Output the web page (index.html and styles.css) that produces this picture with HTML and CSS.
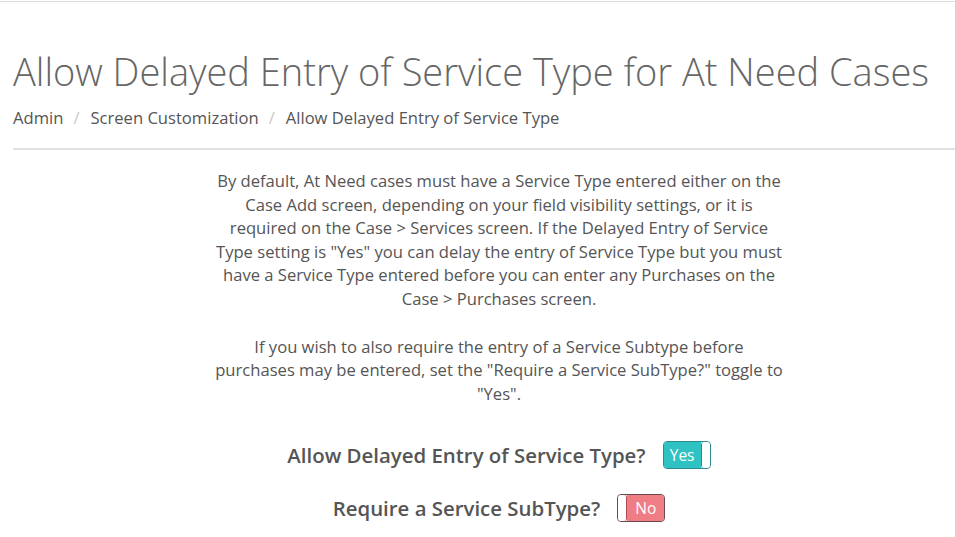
FILE: index.html
```html
<!DOCTYPE html>
<html lang="en">
<head>
  <meta charset="UTF-8">
  <title>Allow Delayed Entry of Service Type</title>
  <link rel="stylesheet" href="styles.css">
</head>
<body>
  <div class="page">
    <h1 class="title">Allow Delayed Entry of Service Type for At Need Cases</h1>
    <ol class="crumbs">
      <li>Admin</li>
      <li>Screen Customization</li>
      <li>Allow Delayed Entry of Service Type</li>
    </ol>
    <hr class="rule">

    <div class="intro">
      <p>By default, At Need cases must have a Service Type entered either on the Case Add screen, depending on your field visibility settings, or it is required on the Case &gt; Services screen. If the Delayed Entry of Service Type setting is "Yes" you can delay the entry of Service Type but you must have a Service Type entered before you can enter any Purchases on the Case &gt; Purchases screen.</p>
      <p>If you wish to also require the entry of a Service Subtype before purchases may be entered, set the "Require a Service SubType?" toggle to "Yes".</p>
    </div>

    <div class="setting">
      <span class="setting-label">Allow Delayed Entry of Service Type?</span>
      <span class="toggle on"><span class="toggle-text">Yes</span><span class="knob"></span></span>
    </div>
    <div class="setting">
      <span class="setting-label">Require a Service SubType?</span>
      <span class="toggle off"><span class="knob"></span><span class="toggle-text">No</span></span>
    </div>
  </div>
</body>
</html>
```

FILE: styles.css
```css
html, body {
  overflow: hidden;
}
body {
  margin: 0;
  border-top: 1px solid #dcdcdc;
  margin-top: 1px;
  font-family: 'Open Sans', sans-serif;
  color: #555;
  background: #fff;
}
.page {
  width: 972px;
  padding-left: 13px;
}
.title {
  font-weight: 300;
  font-size: 38px;
  color: #666;
  margin: 45px 0 0;
  line-height: 48px;
  white-space: nowrap;
}
.crumbs {
  list-style: none;
  display: flex;
  padding: 0;
  margin: 12px 0 0;
  font-size: 16.6px;
  line-height: 22px;
  color: #555;
}
.crumbs li + li::before {
  content: "/";
  color: #c8c8c8;
  padding: 0 11px 0 10px;
}
.rule {
  border: 0;
  border-top: 2px solid #e2e2e2;
  margin: 19px -30px 0 0;
}
.intro {
  width: 570px;
  margin: 19px auto 0;
  text-align: center;
  font-size: 16.6px;
  line-height: 23.6px;
}
.intro p {
  margin: 0 0 24px;
}
.setting {
  display: flex;
  justify-content: center;
  align-items: center;
  gap: 17px;
  margin-top: 36px;
}
.setting + .setting {
  margin-top: 25px;
}
.setting-label {
  font-size: 20.4px;
  font-weight: 600;
  color: #555;
}
.toggle {
  display: flex;
  height: 26px;
  border: 1px solid #6b4a4f;
  border-radius: 4px;
  overflow: hidden;
  font-size: 15.5px;
  font-weight: 500;
}
.toggle.on {
  border-color: #2d8c90;
}
.toggle-text {
  display: flex;
  align-items: center;
  justify-content: center;
  width: 37px;
  color: #fff;
}
.on .toggle-text {
  background: #2ec2c3;
}
.off .toggle-text {
  background: #f07c86;
}
.knob {
  width: 8px;
  background: #fff;
  border-radius: 3px;
}
.on .knob {
  border-left: 1px solid #2d8c90;
}
.off .knob {
  border-right: 1px solid #b04a55;
}
```
